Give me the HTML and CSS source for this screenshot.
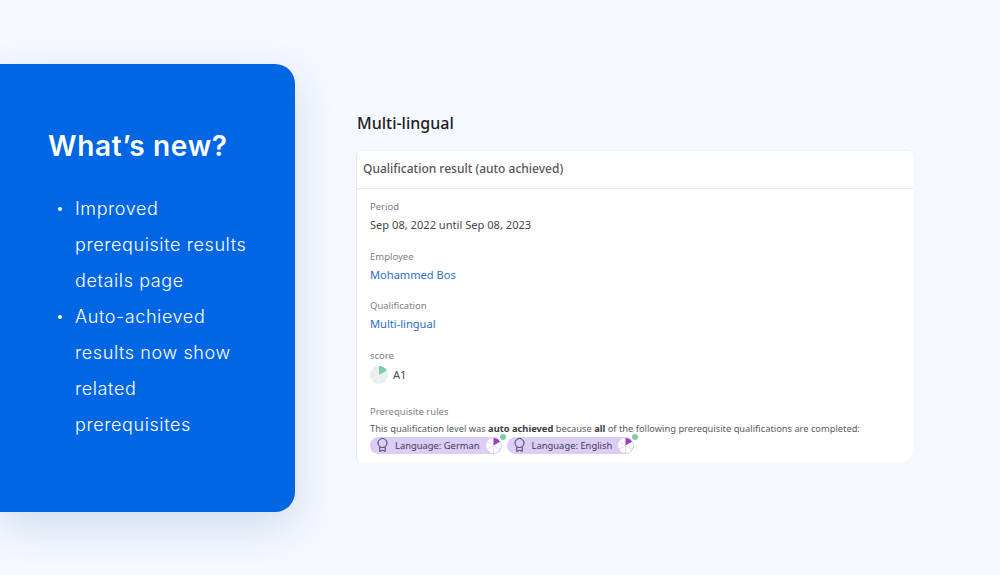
FILE: index.html
```html
<!DOCTYPE html>
<html lang="en">
<head>
<meta charset="utf-8">
<title>What's new</title>
<link rel="stylesheet" href="styles.css">
</head>
<body>
<main class="page">
  <aside class="panel">
    <h1 class="panel-title">What’s new?</h1>
    <ul class="panel-list">
      <li>Improved prerequisite results details page</li>
      <li>Auto-achieved results now show related prerequisites</li>
    </ul>
  </aside>
  <section class="detail">
    <h2 class="detail-title">Multi-lingual</h2>
    <div class="card">
      <div class="card-header">Qualification result (auto achieved)</div>
      <div class="card-body">
        <div class="field">
          <div class="label">Period</div>
          <div class="value">Sep 08, 2022 until Sep 08, 2023</div>
        </div>
        <div class="field">
          <div class="label">Employee</div>
          <div class="value link">Mohammed Bos</div>
        </div>
        <div class="field">
          <div class="label">Qualification</div>
          <div class="value link">Multi-lingual</div>
        </div>
        <div class="field field-score">
          <div class="label">score</div>
          <div class="value score">
            <svg class="score-pie" viewBox="0 0 18 18" width="18" height="18">
              <circle cx="9" cy="9" r="9" fill="#e8eeee"/>
              <path d="M9 9V0A9 9 0 0 1 16.8 4.5Z" fill="#7fcba4"/>
              <path d="M9 9V18M9 9L1.2 4.5M9 9L16.8 13.5M9 9L1.2 13.5" stroke="#fff" stroke-width=".6"/>
            </svg>
            <span>A1</span>
          </div>
        </div>
        <div class="field rules">
          <div class="label">Prerequisite rules</div>
          <div class="rule-text">This qualification level was <b>auto achieved</b> because <b>all</b> of the following prerequisite qualifications are completed:</div>
          <div class="chips">
            <span class="chip">
              <svg class="medal" viewBox="0 0 11 14" width="11" height="14"><circle cx="5.5" cy="5" r="4.500" fill="none" stroke="#3f3a55" stroke-width="1"/><path d="M2.800 9v4.500l2.700-1.300 2.700 1.300V9" fill="none" stroke="#3f3a55" stroke-width="1"/></svg>
              <span class="chip-text">Language: German</span>
              <svg class="chip-pie" viewBox="0 0 16 16" width="15" height="15">
                <circle cx="8" cy="8" r="8" fill="#fff"/>
                <path d="M8 8V0A8 8 0 0 1 14.900 4Z" fill="#9b3fc0"/>
                <path d="M8 8V16M8 8L1.100 4M8 8L14.900 12M8 8L1.100 12" stroke="#dccdf6" stroke-width=".8"/>
              </svg>
              <i class="dot"></i>
            </span>
            <span class="chip">
              <svg class="medal" viewBox="0 0 11 14" width="11" height="14"><circle cx="5.5" cy="5" r="4.500" fill="none" stroke="#3f3a55" stroke-width="1"/><path d="M2.800 9v4.500l2.700-1.300 2.700 1.300V9" fill="none" stroke="#3f3a55" stroke-width="1"/></svg>
              <span class="chip-text">Language: English</span>
              <svg class="chip-pie" viewBox="0 0 16 16" width="15" height="15">
                <circle cx="8" cy="8" r="8" fill="#fff"/>
                <path d="M8 8V0A8 8 0 0 1 14.900 4Z" fill="#9b3fc0"/>
                <path d="M8 8V16M8 8L1.100 4M8 8L14.900 12M8 8L1.100 12" stroke="#dccdf6" stroke-width=".8"/>
              </svg>
              <i class="dot"></i>
            </span>
          </div>
        </div>
      </div>
    </div>
  </section>
</main>
</body>
</html>
```
FILE: styles.css
```css
* { box-sizing: border-box; }
html, body { margin: 0; height: 100%; }
body { background: #f4f8ff; overflow: hidden; }
.page {
  display: flex;
  align-items: flex-start;
  width: 1000px;
  height: 575px;
  padding-top: 64px;
}
.panel {
  flex: none;
  width: 295px;
  height: 448px;
  padding: 63px 44px 0 48px;
  background: #0066e4;
  border-radius: 0 20px 20px 0;
  box-shadow: 0 14px 40px rgba(30, 80, 150, .16);
  color: #fff;
  font-family: "Inter", "Noto Sans", sans-serif;
}
.panel-title {
  margin: 0;
  font-size: 28px;
  line-height: 38px;
  font-weight: 600;
  letter-spacing: .65px;
}
.panel-list {
  margin: 26px 0 0;
  padding: 0 0 0 27px;
  list-style: none;
  font-size: 18px;
  line-height: 36px;
  font-weight: 300;
  letter-spacing: .6px;
}
.panel-list li { position: relative; }
.panel-list li::before {
  content: "";
  position: absolute;
  left: -17.500px;
  top: 16px;
  width: 4px;
  height: 4px;
  border-radius: 50%;
  background: #fff;
}
.detail {
  flex: none;
  width: 557px;
  margin-left: 61px;
  padding-top: 47px;
  font-family: "Noto Sans", sans-serif;
}
.detail-title {
  margin: 0 0 15px 1px;
  font-size: 16px;
  line-height: 24px;
  font-weight: 500;
  color: #1d1d24;
}
.card {
  height: 313px;
  background: #fff;
  border-left: 1px solid #e6eaf0;
  border-top: 1px solid #eef1f5;
  border-radius: 6px 6px 14px 6px;
}
.card-header {
  height: 38px;
  padding-left: 6px;
  border-bottom: 1px solid #e6e8ec;
  font-size: 12px;
  line-height: 36px;
  font-weight: 500;
  color: #55555c;
}
.card-body { padding: 12px 0 0 13px; }
.field { height: 49.600px; }
.field-score { height: 56px; }
.label {
  font-size: 9.500px;
  line-height: 12px;
  color: #7b7f86;
}
.value {
  margin-top: 4px;
  font-size: 11.100px;
  line-height: 16px;
  color: #46464e;
}
.link { color: #2a6fc9; }
.score {
  display: flex;
  align-items: center;
  gap: 5px;
}
.score-pie { flex: none; }
.rules { height: auto; }
.rule-text {
  margin-top: 4px;
  font-size: 9.300px;
  line-height: 13px;
  white-space: nowrap;
  color: #5a5a62;
}
.rule-text b { font-weight: 700; color: #3a3a42; }
.chips {
  display: flex;
  gap: 5px;
  margin-top: 2px;
}
.chip {
  position: relative;
  display: flex;
  align-items: center;
  height: 17px;
  padding: 0 1px 0 7px;
  border-radius: 9px;
  background: #dccdf6;
  font-size: 9.400px;
  color: #3f3a55;
}
.medal { flex: none; }
.chip-text { margin: 0 6px 0 7px; white-space: nowrap; }
.chip-pie { flex: none; }
.dot {
  position: absolute;
  top: -3px;
  right: -4px;
  width: 6px;
  height: 6px;
  border-radius: 50%;
  background: #7fcba4;
}
```
